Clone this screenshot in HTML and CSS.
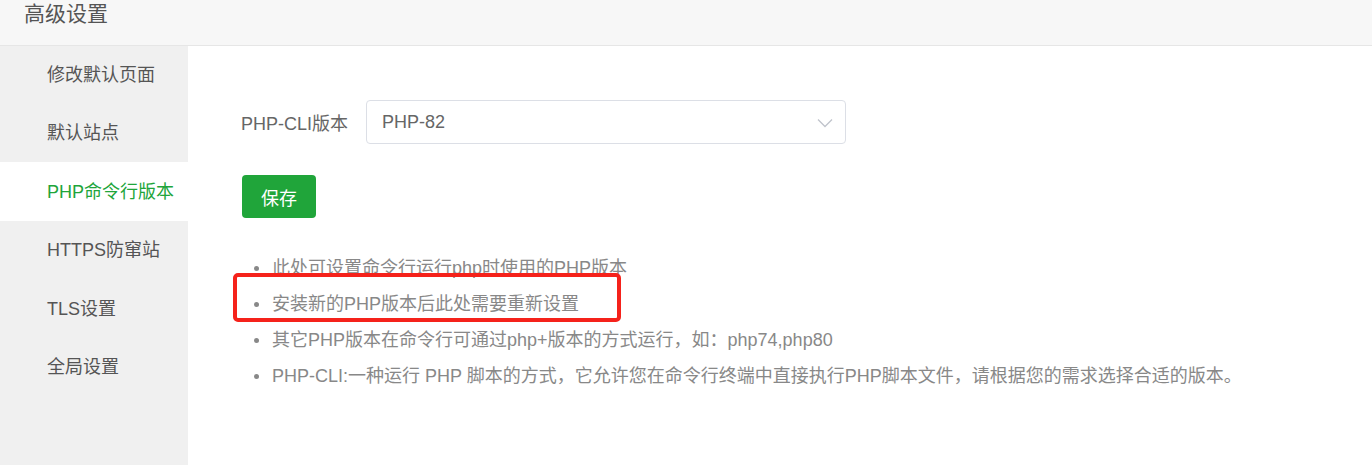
FILE: index.html
```html
<!DOCTYPE html>
<html lang="zh-CN">
<head>
<meta charset="utf-8">
<title>高级设置</title>
<link rel="stylesheet" href="styles.css">
</head>
<body>
<div class="page">
  <div class="header">高级设置</div>
  <div class="body">
    <ul class="side">
      <li class="side-item">修改默认页面</li>
      <li class="side-item">默认站点</li>
      <li class="side-item active">PHP命令行版本</li>
      <li class="side-item">HTTPS防窜站</li>
      <li class="side-item">TLS设置</li>
      <li class="side-item">全局设置</li>
    </ul>
    <div class="main">
      <div class="form-row">
        <label class="label">PHP-CLI版本</label>
        <div class="select">
          <span class="select-text">PHP-82</span>
          <svg class="chev" width="16" height="10" viewBox="0 0 16 10"><path d="M1 1.5 L8 8.5 L15 1.5" fill="none" stroke="#c0c4cc" stroke-width="1.3"/></svg>
        </div>
      </div>
      <button class="btn">保存</button>
      <ul class="tips">
        <li>此处可设置命令行运行php时使用的PHP版本</li>
        <li class="marked">安装新的PHP版本后此处需要重新设置<span class="annot"></span></li>
        <li>其它PHP版本在命令行可通过php+版本的方式运行，如：php74,php80</li>
        <li>PHP-CLI:一种运行 PHP 脚本的方式，它允许您在命令行终端中直接执行PHP脚本文件，请根据您的需求选择合适的版本。</li>
      </ul>
    </div>
  </div>
</div>
</body>
</html>
```
FILE: styles.css
```css
* { box-sizing: border-box; }
html, body { margin: 0; padding: 0; background: #fff; }
body {
  font-family: "Liberation Sans", "Noto Sans CJK SC", sans-serif;
  font-size: 18px;
  color: #555;
  width: 1372px;
  height: 465px;
  overflow: hidden;
}
.page { display: flex; flex-direction: column; height: 465px; }
.header {
  height: 46px;
  background: #f7f7f7;
  border-bottom: 1px solid #e6e6e6;
  padding-left: 24px;
  font-size: 21px;
  line-height: 28px;
  color: #555;
}
.body { display: flex; flex: 1; }
.side {
  list-style: none;
  margin: 0;
  padding: 0;
  width: 188px;
  background: #f0f0f0;
}
.side-item {
  height: 58.5px;
  display: flex;
  align-items: center;
  padding-left: 47px;
  padding-bottom: 3px;
  color: #555;
}
.side-item:first-child { height: 57.5px; }
.side-item.active { background: #fff; color: #20a53a; }
.main { flex: 1; padding: 54px 0 0 53px; }
.form-row { display: flex; align-items: center; }
.label { width: 125px; color: #666; }
.select {
  width: 480px;
  height: 44px;
  border: 1px solid #dcdfe6;
  border-radius: 4px;
  display: flex;
  align-items: center;
  justify-content: space-between;
  padding: 0 12px 0 15px;
  color: #666;
}
.chev { margin-top: 1px; }
.btn {
  margin: 31px 0 0 1px;
  width: 74px;
  height: 43px;
  border: none;
  border-radius: 4px;
  background: #20a53a;
  color: #fff;
  font-family: inherit;
  font-size: 18px;
  padding: 0;
  display: block;
}
.tips {
  list-style: none;
  margin: 32px 0 0 0;
  padding: 0 0 0 31px;
  color: #888;
  line-height: 36px;
}
.tips li { position: relative; }
.tips li::before {
  content: "";
  position: absolute;
  left: -18px;
  top: 16px;
  width: 5px;
  height: 5px;
  border-radius: 50%;
  background: #888;
}
.annot {
  position: absolute;
  left: -39px;
  top: -13px;
  width: 388px;
  height: 49px;
  border: 4px solid #f5221b;
  border-radius: 5px;
}
```
